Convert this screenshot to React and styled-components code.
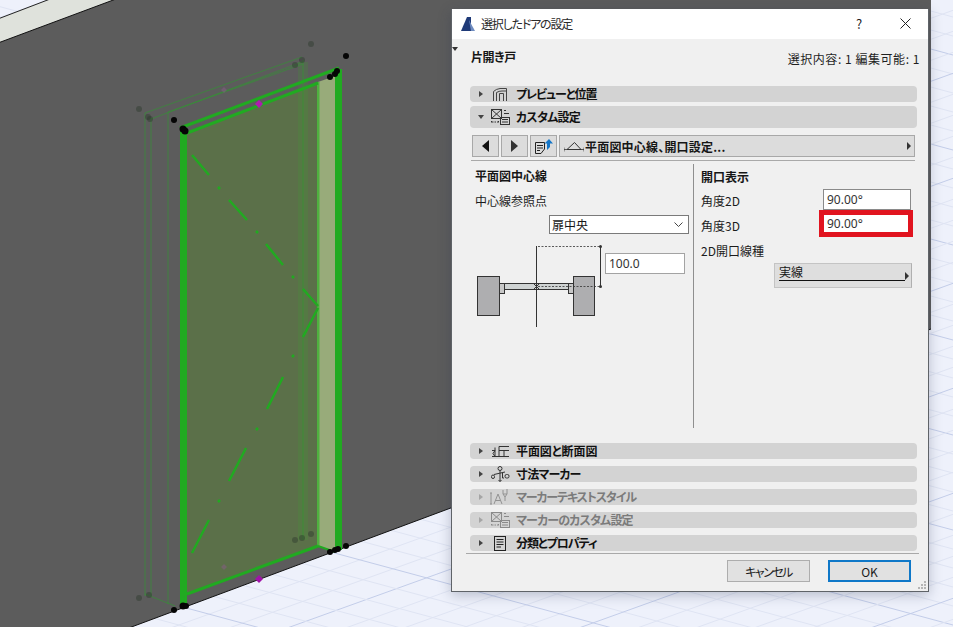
import styled, { createGlobalStyle } from 'styled-components';

const GlobalStyle = createGlobalStyle`
  html, body { margin: 0; padding: 0; background: #eef1fb; }
  body { font-family: "Noto Sans CJK JP", "Noto Sans", sans-serif; }
`;

const Desktop = styled.div`
  position: relative;
  width: 953px;
  height: 627px;
  overflow: hidden;
  font-family: "Noto Sans CJK JP", "Noto Sans", sans-serif;
  font-feature-settings: "palt";
  color: #161616;
`;

const Viewport = styled.svg`
  display: block;
`;

const SceneGroup = styled.g`
  filter: blur(0.45px);
`;

/* dialog sits over the 3D view like a window on a desktop */
const Dialog = styled.div`
  position: absolute;
  left: 451px;
  top: 9px;
  width: 478px;
  height: 583px;
  box-sizing: border-box;
  display: flex;
  flex-direction: column;
  background: #f0f0f0;
  border: 1px solid #5f6368;
  border-top: none;
  box-shadow: 0 3px 12px rgba(40, 50, 80, 0.28);
`;

const TitleBar = styled.div`
  height: 30px;
  flex: none;
  box-sizing: border-box;
  display: flex;
  align-items: center;
  background: #fff;
  font-size: 12px;
  padding: 0 0 1px 9px;
`;

const TitleText = styled.span`
  margin-left: 6px;
  flex: 1;
  color: #2a2a2a;
  letter-spacing: -1.2px;
`;

const TitleGlyph = styled.span`
  width: 46px;
  text-align: center;
  font-size: 13px;
  color: #222;
  display: flex;
  justify-content: center;
`;

const Body = styled.div`
  position: relative;
  flex: 1;
  display: flex;
  flex-direction: column;
`;

const Marker = styled.span`
  position: absolute;
  left: 0;
  top: 8px;
  border-left: 3.5px solid transparent;
  border-right: 3.5px solid transparent;
  border-top: 4px solid #333;
`;

const Header = styled.div`
  height: 47px;
  flex: none;
  display: flex;
  justify-content: space-between;
  padding: 10px 8px 0 19px;
  box-sizing: border-box;
`;

const ElementName = styled.span`
  font-size: 12px;
  font-weight: 700;
  line-height: 16px;
  letter-spacing: -0.4px;
`;

const SelectionInfo = styled.span`
  font-size: 12px;
  line-height: 16px;
  margin-top: 2px;
  color: #1f1f1f;
  letter-spacing: 0.55px;
`;

const Sections = styled.div`
  display: flex;
  flex-direction: column;
  gap: ${(p) => p.$gap}px;
  margin: ${(p) => p.$top || 0}px 11px 0 18px;
`;

const SectionRow = styled.div`
  height: ${(p) => (p.$tall ? 22 : 16)}px;
  display: flex;
  align-items: center;
  padding-left: 8px;
  border-radius: 4px;
  background: #d3d3d3;
  color: ${(p) => (p.$disabled ? '#7b7b7b' : '#111')};
`;

const Caret = styled.span`
  width: 5px;
  flex: none;
  display: flex;
  justify-content: center;
  &::before {
    content: '';
    flex: none;
    border-style: solid;
    border-color: transparent;
    ${(p) =>
      p.$open
        ? `border-width: 4px 3.5px 0 3.5px; border-top-color: #444;`
        : `border-width: 3.5px 0 3.5px 4px; border-left-color: ${p.$disabled ? '#a5a5a5' : '#444'};`}
  }
`;

const IconSlot = styled.span`
  width: 20px;
  height: 16px;
  margin-left: 7px;
  flex: none;
  display: flex;
  align-items: center;
  justify-content: center;
  opacity: ${(p) => (p.$disabled ? 0.45 : 1)};
`;

const SectionLabel = styled.span`
  margin-left: 6px;
  font-size: 12px;
  font-weight: 700;
  line-height: 16px;
  letter-spacing: ${(p) => p.$track || 0}px;
`;

const Toolbar = styled.div`
  display: flex;
  gap: 2px;
  height: 22px;
  margin: 7px 13px 0 20px;
`;

const ToolButton = styled.div`
  width: ${(p) => p.$w}px;
  flex: none;
  box-sizing: border-box;
  display: flex;
  align-items: center;
  justify-content: center;
  background: #dcdcdc;
  border: 1px solid #a8a8a8;
`;

const PopupButton = styled.div`
  flex: 1;
  box-sizing: border-box;
  display: flex;
  align-items: center;
  padding: 0 3px 0 4px;
  background: #dcdcdc;
  border: 1px solid #a8a8a8;
  font-size: 12px;
  font-weight: 700;
`;

const PopupLabel = styled.span`
  flex: 1;
  margin-left: 1px;
  letter-spacing: 0.2px;
`;

const Arrow = styled.span`
  flex: none;
  border-style: solid;
  border-color: transparent;
  border-width: ${(p) => p.$s || 4}px 0 ${(p) => p.$s || 4}px ${(p) => p.$w || 4}px;
  border-left-color: #333;
`;

const ArrowLeft = styled(Arrow)`
  border-width: 6px 7px 6px 0;
  border-left-color: transparent;
  border-right-color: #111;
`;

const Panels = styled.div`
  height: 268px;
  box-sizing: border-box;
  flex: none;
  margin: 3px 13px 0 19px;
  border-top: 1px solid #a9a9a9;
  display: grid;
  grid-template-columns: 222px 1fr;
`;

const LeftPanel = styled.div`
  padding: 7px 0 0 4px;
  display: flex;
  flex-direction: column;
  align-items: flex-start;
`;

const RightPanel = styled.div`
  margin-top: 3px;
  padding: 5px 0 0 7px;
  border-left: 1px solid #8f8f8f;
  display: flex;
  flex-direction: column;
  align-items: flex-start;
`;

const PanelTitle = styled.div`
  font-size: 12px;
  font-weight: 700;
  line-height: 16px;
`;

const FieldLabel = styled.div`
  font-size: 12px;
  line-height: 16px;
  margin-top: ${(p) => p.$top || 0}px;
  color: #1c1c1c;
`;

const Select = styled.div`
  width: 140px;
  height: 19px;
  margin: 6px 0 0 74px;
  box-sizing: border-box;
  display: flex;
  align-items: center;
  justify-content: space-between;
  padding: 0 5px 0 2px;
  background: #fff;
  border: 1px solid #7a7a7a;
  font-size: 12px;
`;

const DiagramRow = styled.div`
  display: flex;
  align-items: flex-start;
  margin: 11px 0 0 1px;
`;

const TextField = styled.div`
  box-sizing: border-box;
  width: ${(p) => p.$w}px;
  height: ${(p) => p.$h}px;
  margin: ${(p) => p.$m || 0};
  flex: none;
  display: flex;
  align-items: center;
  padding-left: ${(p) => p.$pad || 3}px;
  background: #fff;
  border: 1px solid ${(p) => p.$line || '#a3a3a3'};
  font-family: "Noto Sans", sans-serif;
  font-size: 12px;
  color: #333;
`;

const FieldRow = styled.div`
  display: grid;
  grid-template-columns: 118px 94px;
  align-items: center;
  margin-top: ${(p) => p.$top || 0}px;
`;

const Highlight = styled(TextField)`
  border: 5px solid #e1141f;
`;

const LineButton = styled.div`
  position: relative;
  box-sizing: border-box;
  width: 138px;
  height: 25px;
  margin: 4px 0 0 73px;
  padding: 0 2px 0 4px;
  display: flex;
  align-items: center;
  justify-content: space-between;
  background: #dedede;
  border: 1px solid #c4c4c4;
  border-right-color: #b0b0b0;
  font-size: 12px;
`;

const LineName = styled.span`
  align-self: flex-start;
  flex: 1;
  line-height: 15px;
  margin-top: 0;
  height: 16px;
  border-bottom: 1px solid #111;
`;

const Footer = styled.div`
  display: flex;
  justify-content: flex-end;
  gap: 18px;
  margin: 2px 0 0 14px;
  width: 453px;
  box-sizing: border-box;
  padding: 6px 8px 0 0;
  border-top: 1px solid #a9a9a9;
`;

const DialogButton = styled.div`
  box-sizing: border-box;
  width: 83px;
  height: 22px;
  display: flex;
  align-items: center;
  justify-content: center;
  background: #e1e1e1;
  border: ${(p) => (p.$primary ? '2px solid #0f78c8' : '1px solid #adadad')};
  font-size: 12px;
  letter-spacing: ${(p) => p.$track || 0}px;
  color: #1a1a1a;
`;

const Grip = styled.svg`
  position: absolute;
  right: 1px;
  bottom: 1px;
`;

/* floor grid, two families of skew lines */
const gridLines = [];
for (let i = -40; i < 90; i++) {
  const major = i % 5 === 0;
  gridLines.push({ key: 'a' + i, x1: -10, y1: i * 21, x2: 963, y2: i * 21 - 973 * 0.36, major });
  gridLines.push({ key: 'b' + i, x1: -10, y1: i * 19 - 300, x2: 963, y2: i * 19 - 300 + 973 * 0.27, major });
}

const dashes = [
  [192, 155, 209, 175], [229, 200, 247, 220], [266, 244, 283, 265], [303, 289, 318, 306],
  [318, 308, 303, 337], [283, 377, 267, 409], [246, 448, 229, 481], [209, 520, 192, 553],
  [218, 187, 220, 189], [256, 231, 258, 233], [292, 276, 294, 278],
  [294, 355, 292, 357], [258, 428, 256, 430], [220, 500, 218, 502],
];

const ghostLines = [
  [145, 113, 145, 596], [151, 118, 151, 596], [168, 112, 168, 604], [303, 60, 303, 540],
  [145, 113, 302, 57], [151, 119, 302, 62], [168, 112, 303, 64], [145, 594, 175, 606],
];

const blackDots = [
  [183, 129, 3.5], [185, 131, 3.5], [174, 120, 3], [330, 77, 3], [335, 74, 3], [337, 71, 3], [346, 56, 3],
  [183, 606, 3.5], [186, 606, 3], [174, 610, 3], [330, 552, 3], [335, 550, 3], [338, 549, 3], [346, 546, 3],
];

const ghostDots = [
  [139, 109], [148, 117], [150, 119], [295, 65], [302, 60], [311, 44],
  [139, 598], [149, 595], [295, 540], [302, 538], [311, 534],
];

function Scene() {
  return (
    <Viewport width="953" height="627" viewBox="0 0 953 627">
      <SceneGroup>
        <rect x="-10" y="-10" width="973" height="647" fill="#eef1fb" />
        {gridLines.map((l) => (
          <line
            key={l.key}
            x1={l.x1}
            y1={l.y1}
            x2={l.x2}
            y2={l.y2}
            stroke={l.major ? '#c3cde9' : '#dfe4f3'}
            strokeWidth="1"
          />
        ))}
        <polygon points="-10,22 58,-4 124,-4 -10,46" fill="#dfe2dc" />
        <line x1="-10" y1="22" x2="58" y2="-4" stroke="#222" strokeWidth="1" />
        <polygon points="-10,46 124,-4 931,-4 931,329 110,635 -10,635" fill="#5c5c5c" />
        <line x1="-10" y1="46" x2="124" y2="-4" stroke="#111" strokeWidth="1" />
        <line x1="110" y1="635" x2="931" y2="329" stroke="#111" strokeWidth="1" />

        {/* door */}
        <polygon points="187,132 318,82 318,546 187,594" fill="#5b7049" />
        <polygon points="318,82 335,76 335,551 318,546" fill="#98ab7a" />
        <rect x="298" y="62" width="10" height="478" fill="#3f9a34" opacity="0.22" />
        {ghostLines.map((l, i) => (
          <line key={i} x1={l[0]} y1={l[1]} x2={l[2]} y2={l[3]} stroke="#2f9a2f" strokeWidth="1.2" opacity="0.5" />
        ))}
        <rect x="180" y="128" width="7" height="477" fill="#21aa21" />
        <rect x="335" y="69" width="7" height="481" fill="#21aa21" />
        <rect x="317" y="82" width="2.5" height="464" fill="#4fb13f" />
        <line x1="180" y1="128" x2="339" y2="68" stroke="#21aa21" strokeWidth="3" />
        <line x1="187" y1="133" x2="318" y2="83" stroke="#21aa21" strokeWidth="3" />
        <line x1="187" y1="594" x2="318" y2="546" stroke="#21aa21" strokeWidth="3" />
        <line x1="318" y1="546" x2="335" y2="552" stroke="#21aa21" strokeWidth="2" />
        {dashes.map((d, i) => (
          <line key={i} x1={d[0]} y1={d[1]} x2={d[2]} y2={d[3]} stroke="#21aa21" strokeWidth="2.5" />
        ))}
        {ghostDots.map((d, i) => (
          <circle key={i} cx={d[0]} cy={d[1]} r="3" fill="#2c3a2c" opacity="0.45" />
        ))}
        {blackDots.map((d, i) => (
          <circle key={i} cx={d[0]} cy={d[1]} r={d[2]} fill="#050505" />
        ))}
        <polygon points="259,100 263,104 259,108 255,104" fill="#b01ab0" />
        <polygon points="259,575 263,579 259,583 255,579" fill="#a012a8" />
        <polygon points="224,87 227,90 224,93 221,90" fill="#8a5a8a" opacity="0.5" />
        <polygon points="224,564 227,567 224,570 221,567" fill="#8a5a8a" opacity="0.5" />
      </SceneGroup>
    </Viewport>
  );
}

const AppLogo = () => (
  <svg width="14" height="14" viewBox="0 0 14 14">
    <polygon points="0,14 6,0 10,0 10,14" fill="#1f3a78" />
    <polygon points="8,3 14,14 10,14" fill="#6f8cc0" />
  </svg>
);

const CloseIcon = () => (
  <svg width="11" height="11" viewBox="0 0 11 11" stroke="#222" strokeWidth="1">
    <line x1="0.5" y1="0.5" x2="10.5" y2="10.5" />
    <line x1="10.5" y1="0.5" x2="0.5" y2="10.5" />
  </svg>
);

const PreviewIcon = () => (
  <svg width="14" height="13" viewBox="0 0 14 13" fill="none" stroke="#444" strokeWidth="1">
    <path d="M0.5 13V3.5Q3 1 7 0.5H13.5V13" />
    <path d="M3.5 13V4.5Q6 3 9 3H13.5" />
    <path d="M6.5 13V5.5H10.5V13" />
  </svg>
);

const CustomIcon = () => (
  <svg width="19" height="16" viewBox="0 0 19 16" fill="none" stroke="#333" strokeWidth="1">
    <rect x="0.5" y="0.5" width="10" height="9" />
    <path d="M0.5 0.5L10.5 9.5M10.5 0.5L0.5 9.5" />
    <path d="M13 1.5H15M13 4.5H18" />
    <rect x="9.5" y="8.5" width="9" height="7" />
    <path d="M11 10.5H17M11 13H17" />
    <path d="M1 13H7M0.5 12V14M7.5 12V14" strokeDasharray="1.5 1" />
  </svg>
);

const PlanIcon = () => (
  <svg width="19" height="11" viewBox="0 0 19 11" fill="none" stroke="#333" strokeWidth="1">
    <path d="M1 4.5H4L2 7.5L4 10.5H1" />
    <path d="M4 1.5V10.5H8V0.5H18M5 10.5H18M8 4.5H18M13 4.5V10.5" />
  </svg>
);

const MarkerIcon = () => (
  <svg width="19" height="16" viewBox="0 0 19 16" fill="none" stroke="#333" strokeWidth="1">
    <circle cx="9" cy="2.5" r="2" />
    <path d="M9 4.5V15.5M7.5 14L9 15.5L10.5 14M3 8.5L14 6" />
    <rect x="0.5" y="9" width="3" height="3.5" rx="1.5" />
    <path d="M11.5 7V12H13" />
    <rect x="14" y="8.5" width="4" height="3.5" rx="1.5" />
  </svg>
);

const MarkerTextIcon = () => (
  <svg width="20" height="16" viewBox="0 0 20 16" fill="none" stroke="#444" strokeWidth="1">
    <path d="M1 4V15M0 4H2M0 15H2" />
    <path d="M4 15L8 5L12 15M5.5 11.5H10.5" />
    <path d="M13 5L15 8L17 5M15 8V12M13 1V5H17V0" />
  </svg>
);

const ListIcon = () => (
  <svg width="12" height="15" viewBox="0 0 12 15" fill="none" stroke="#222" strokeWidth="1">
    <rect x="0.5" y="0.5" width="11" height="14" />
    <path d="M2.5 3.5H9.5M2.5 6H9.5M2.5 8.5H9.5M2.5 11H7" />
  </svg>
);

const NoteIcon = () => (
  <svg width="20" height="17" viewBox="0 0 20 17" fill="none">
    <path d="M1.5 4.5H10.5V11L7 15.5H1.5Z" stroke="#222" strokeWidth="1" />
    <path d="M3 7.5H9M3 10H9M3 12.5H6" stroke="#222" strokeWidth="1" />
    <path d="M13 12V5.5H10.5L15 1L19 5.5H16V9Z" fill="#1476c8" />
  </svg>
);

const OutlineIcon = () => (
  <svg width="20" height="11" viewBox="0 0 20 11" fill="none" stroke="#333" strokeWidth="1">
    <path d="M0 8.5H4M16 8.5H20M0 6.5V10.5M20 6.5V10.5" strokeWidth="0.8" />
    <path d="M3 8.5L10.5 1.5L17 8.5H3" />
  </svg>
);

const Chevron = () => (
  <svg width="9" height="6" viewBox="0 0 9 6" fill="none" stroke="#444" strokeWidth="1">
    <path d="M0.5 0.5L4.5 4.5L8.5 0.5" />
  </svg>
);

const PlanDiagram = () => (
  <svg width="129" height="84" viewBox="476 245 129 84">
    <g stroke="#333" strokeWidth="1">
      <rect x="477.5" y="276.5" width="22" height="39" fill="#aeaeb0" />
      <rect x="573.5" y="276.5" width="21" height="39" fill="#aeaeb0" />
      <rect x="499.5" y="283.5" width="5" height="10" fill="#c8c8c8" />
      <rect x="568.5" y="283.5" width="5" height="10" fill="#c8c8c8" />
      <rect x="504.5" y="283.5" width="64" height="6" fill="#cfd3d3" />
      <line x1="536.5" y1="246" x2="536.5" y2="327" />
      <path d="M533 283L540 290M540 283L533 290" fill="none" />
      <line x1="600.5" y1="246" x2="600.5" y2="286" />
      <path d="M538 246.5H600M538 286.5H600" strokeDasharray="2 1.5" strokeWidth="0.8" />
    </g>
    <circle cx="600.5" cy="246.5" r="1.5" fill="#333" />
    <circle cx="600.5" cy="286.5" r="1.5" fill="#333" />
  </svg>
);

const Grippy = () => (
  <Grip width="10" height="9" viewBox="0 0 10 9" fill="#b5b5b5">
    <rect x="7" y="0" width="2" height="2" />
    <rect x="4" y="3" width="2" height="2" />
    <rect x="7" y="3" width="2" height="2" />
    <rect x="1" y="6" width="2" height="2" />
    <rect x="4" y="6" width="2" height="2" />
    <rect x="7" y="6" width="2" height="2" />
  </Grip>
);

function Section({ icon, label, open, tall, disabled, track }) {
  return (
    <SectionRow $tall={tall} $disabled={disabled}>
      <Caret $open={open} $disabled={disabled} />
      <IconSlot $disabled={disabled}>{icon}</IconSlot>
      <SectionLabel $track={track}>{label}</SectionLabel>
    </SectionRow>
  );
}

export default function App() {
  return (
    <Desktop>
      <GlobalStyle />
      <Scene />
      <Dialog>
        <TitleBar>
          <AppLogo />
          <TitleText>選択したドアの設定</TitleText>
          <TitleGlyph>?</TitleGlyph>
          <TitleGlyph>
            <CloseIcon />
          </TitleGlyph>
        </TitleBar>
        <Body>
          <Marker />
          <Header>
            <ElementName>片開き戸</ElementName>
            <SelectionInfo>選択内容: 1 編集可能: 1</SelectionInfo>
          </Header>
          <Sections $gap={4}>
            <Section icon={<PreviewIcon />} label="プレビューと位置" track={-1.1} />
            <Section icon={<CustomIcon />} label="カスタム設定" track={-0.7} open tall />
          </Sections>
          <Toolbar>
            <ToolButton $w={27}>
              <ArrowLeft />
            </ToolButton>
            <ToolButton $w={27}>
              <Arrow $s={6} $w={7} />
            </ToolButton>
            <ToolButton $w={27}>
              <NoteIcon />
            </ToolButton>
            <PopupButton>
              <OutlineIcon />
              <PopupLabel>平面図中心線、開口設定...</PopupLabel>
              <Arrow />
            </PopupButton>
          </Toolbar>
          <Panels>
            <LeftPanel>
              <PanelTitle>平面図中心線</PanelTitle>
              <FieldLabel $top={9}>中心線参照点</FieldLabel>
              <Select>
                扉中央
                <Chevron />
              </Select>
              <DiagramRow>
                <PlanDiagram />
                <TextField $w={80} $h={21} $m="8px 0 0 0">100.0</TextField>
              </DiagramRow>
            </LeftPanel>
            <RightPanel>
              <PanelTitle>開口表示</PanelTitle>
              <FieldRow $top={4}>
                <FieldLabel $top={2}>角度2D</FieldLabel>
                <TextField $w={88} $h={21} $m="0 2px 0 4px" $line="#8a8a8a">90.00°</TextField>
              </FieldRow>
              <FieldRow>
                <FieldLabel $top={4}>角度3D</FieldLabel>
                <Highlight $w={94} $h={27}>90.00°</Highlight>
              </FieldRow>
              <FieldLabel $top={6}>2D開口線種</FieldLabel>
              <LineButton>
                <LineName>実線</LineName>
                <Arrow $s={4} $w={4} />
              </LineButton>
            </RightPanel>
          </Panels>
          <Sections $gap={7} $top={15}>
            <Section icon={<PlanIcon />} label="平面図と断面図" track={-0.1} />
            <Section icon={<MarkerIcon />} label="寸法マーカー" track={-0.8} />
            <Section icon={<MarkerTextIcon />} label="マーカーテキストスタイル" track={-1.1} disabled />
            <Section icon={<CustomIcon />} label="マーカーのカスタム設定" track={-0.8} disabled />
            <Section icon={<ListIcon />} label="分類とプロパティ" track={-1.1} />
          </Sections>
          <Footer>
            <DialogButton $track={-1.5}>キャンセル</DialogButton>
            <DialogButton $primary>OK</DialogButton>
          </Footer>
          <Grippy />
        </Body>
      </Dialog>
    </Desktop>
  );
}
